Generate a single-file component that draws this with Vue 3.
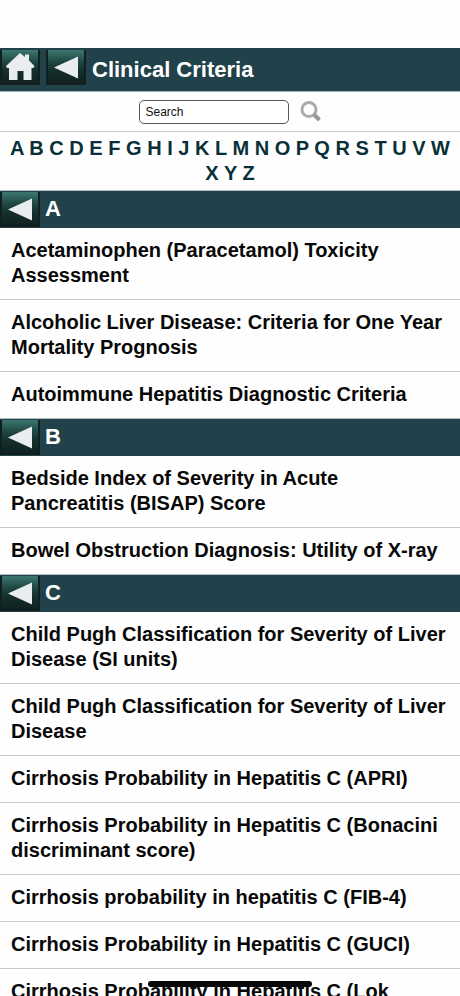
<template>
  <div class="app">
    <!-- Header -->
    <header class="title-bar">
      <button class="nav-btn" aria-label="Home">
        <svg width="30" height="30" viewBox="0 0 30 30">
          <path d="M15 1 L20 5 V2.5 H24 V8.5 L29.5 14 L28.5 16 H26.5 V28 H18.5 V19 H12.5 V28 H4 V16 H2 L1 14 Z" fill="#e9eded" />
        </svg>
      </button>
      <button class="nav-btn" aria-label="Back">
        <svg width="30" height="30" viewBox="0 0 30 30">
          <path d="M3 15.5 L27 4.5 V26.5 Z" fill="#e9eded" />
        </svg>
      </button>
      <h1>Clinical Criteria</h1>
    </header>

    <!-- Search -->
    <form class="search" @submit.prevent>
      <input v-model="query" type="text" aria-label="Search" />
      <button class="search-btn" aria-label="Submit search">
        <svg width="22" height="22" viewBox="0 0 22 22">
          <circle cx="9" cy="8.5" r="7" fill="none" stroke="#aaa" stroke-width="3" />
          <path d="M14 13.5 L19.5 19" stroke="#999" stroke-width="4" />
        </svg>
      </button>
    </form>

    <!-- Alphabet -->
    <nav class="letters">
      <template v-for="letter in letters" :key="letter">
        <a :href="'#' + letter">{{ letter }}</a>{{ ' ' }}
      </template>
    </nav>

    <!-- Sections -->
    <section v-for="section in sections" :id="section.letter" :key="section.letter">
      <div class="section-bar">
        <button class="nav-btn" aria-label="Back to top">
          <svg width="30" height="30" viewBox="0 0 30 30">
            <path d="M3 15.5 L27 4.5 V26.5 Z" fill="#e9eded" />
          </svg>
        </button>
        <h2>{{ section.letter }}</h2>
      </div>
      <ul>
        <li v-for="item in section.items" :key="item">
          <a href="#">{{ item }}</a>
        </li>
      </ul>
    </section>

    <div class="home-indicator"></div>
  </div>
</template>

<script setup>
import { ref } from 'vue'

const query = ref('Search')

const letters = 'ABCDEFGHIJKLMNOPQRSTUVWXYZ'.split('')

const sections = [
  {
    letter: 'A',
    items: [
      'Acetaminophen (Paracetamol) Toxicity Assessment',
      'Alcoholic Liver Disease: Criteria for One Year Mortality Prognosis',
      'Autoimmune Hepatitis Diagnostic Criteria'
    ]
  },
  {
    letter: 'B',
    items: [
      'Bedside Index of Severity in Acute Pancreatitis (BISAP) Score',
      'Bowel Obstruction Diagnosis: Utility of X-ray'
    ]
  },
  {
    letter: 'C',
    items: [
      'Child Pugh Classification for Severity of Liver Disease (SI units)',
      'Child Pugh Classification for Severity of Liver Disease',
      'Cirrhosis Probability in Hepatitis C (APRI)',
      'Cirrhosis Probability in Hepatitis C (Bonacini discriminant score)',
      'Cirrhosis probability in hepatitis C (FIB-4)',
      'Cirrhosis Probability in Hepatitis C (GUCI)',
      'Cirrhosis Probability in Hepatitis C (Lok'
    ]
  }
]
</script>

<style>
body {
  margin: 0;
  background: #fefefe;
}
</style>

<style scoped>
.app {
  box-sizing: border-box;
  height: 100vh;
  overflow: hidden;
  padding-top: 48px;
  font-family: "Liberation Sans", Arial, sans-serif;
  font-size: 20px;
  font-weight: bold;
  line-height: 25px;
  color: #080808;
}

.title-bar {
  display: flex;
  gap: 6px;
  padding: 2px 0 6px;
  background: #21424b;
  border-bottom: 1px solid #9fb3b6;
}

h1,
h2 {
  margin: 0;
  color: #fff;
}

h1 {
  font-size: 22px;
  line-height: 40px;
  height: 35px;
}

.nav-btn {
  display: flex;
  flex: none;
  align-items: center;
  justify-content: center;
  box-sizing: border-box;
  width: 40px;
  height: 35px;
  padding: 0;
  border: 1px solid #10201f;
  border-width: 0 2px 1px;
  background: linear-gradient(#3c7770, #1f4643 35%, #15302e 60%, #10201f);
  cursor: pointer;
}

.search {
  display: flex;
  align-items: center;
  justify-content: center;
  gap: 11px;
  height: 39px;
  border-bottom: 1px solid #ccc;
}

.search input {
  box-sizing: border-box;
  width: 150px;
  height: 24px;
  padding: 0 6px;
  border: 1px solid #555;
  border-radius: 5px;
  background: #fff;
  color: #111;
  font-family: inherit;
  font-size: 12px;
}

.search-btn {
  display: flex;
  padding: 0;
  border: none;
  background: none;
  cursor: pointer;
}

.letters {
  padding: 4px 8px;
  text-align: center;
}

.letters a {
  color: #0a3037;
  text-decoration: none;
}

.section-bar {
  display: flex;
  gap: 5px;
  padding: 1px 0;
  background: #21424b;
  border-top: 1px solid #b3bdbe;
}

.section-bar h2 {
  font-size: 22px;
  line-height: 34px;
}

ul {
  margin: 0;
  padding: 0;
  list-style: none;
}

li + li {
  border-top: 1px solid #c8c8c8;
}

li a {
  display: block;
  padding: 10px 11px 11px;
  color: inherit;
  text-decoration: none;
}

.home-indicator {
  position: fixed;
  bottom: 9px;
  left: 50%;
  width: 164px;
  height: 6px;
  margin-left: -82px;
  border-radius: 3px;
  background: #080808;
}
</style>
